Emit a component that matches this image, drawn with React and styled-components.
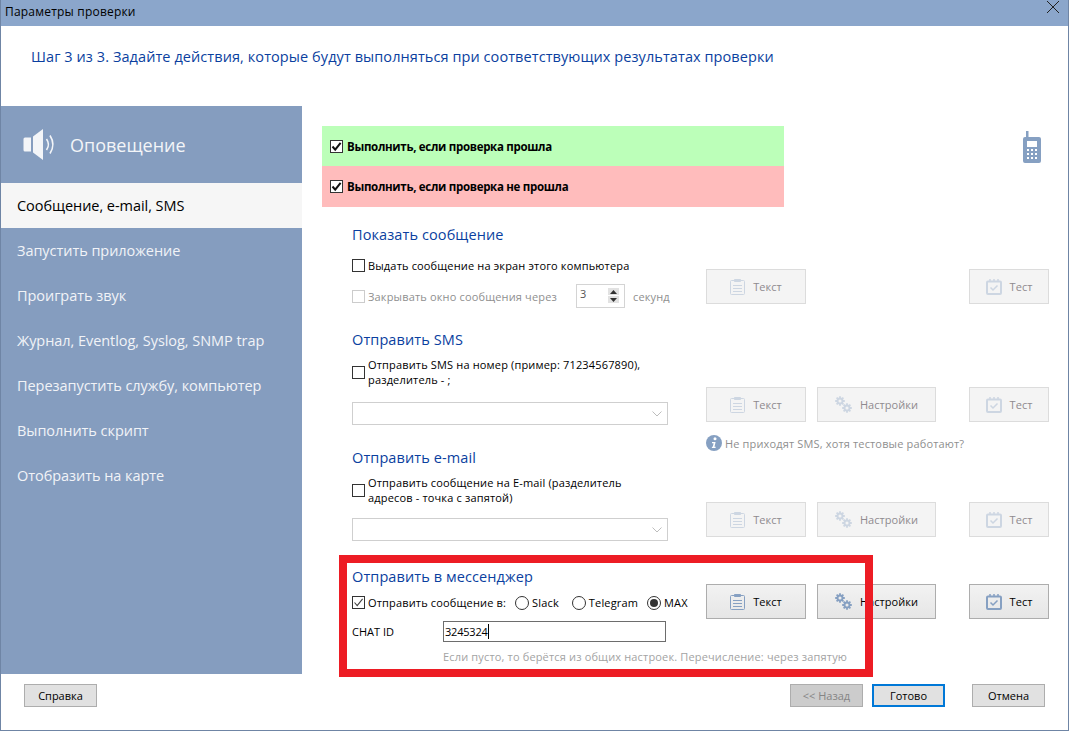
import React from 'react';
import styled, { createGlobalStyle } from 'styled-components';

const Global = createGlobalStyle`
  html, body { margin: 0; padding: 0; background: #fff; }
  body { font-family: "Open Sans", "Noto Sans", sans-serif; color: #000; }
  * { box-sizing: border-box; }
`;

const ICON = '#86a0c2';

const Window = styled.div`
  position: relative;
  width: 1069px;
  height: 731px;
  display: flex;
  flex-direction: column;
  border: solid #6f85a5;
  border-width: 0 1px 1px 1px;
  overflow: hidden;
`;

const TitleBar = styled.div`
  height: 26px;
  flex: none;
  background: #8ba6cb;
  display: flex;
  align-items: center;
  justify-content: space-between;
  padding: 0 9px 4px 4px;
  font-size: 12px;
  letter-spacing: 0.2px;
  svg { align-self: flex-start; margin-top: 1px; }
`;

const Heading = styled.div`
  height: 80px;
  flex: none;
  padding: 21px 0 0 30px;
  font-size: 14.5px;
  line-height: 20px;
  letter-spacing: 0.08px;
  color: #0b3fa0;
`;

const Body = styled.div`
  height: 568px;
  flex: none;
  display: flex;
`;

const Sidebar = styled.nav`
  width: 301px;
  flex: none;
  background: #859dbf;
`;

const SidebarHead = styled.div`
  height: 77px;
  display: flex;
  align-items: center;
  gap: 13px;
  padding-left: 22px;
  font-size: 18px;
  color: #f3f5f8;
`;

const NavItem = styled.div`
  height: 45px;
  display: flex;
  align-items: center;
  padding-left: 16px;
  font-size: 14.5px;
  letter-spacing: -0.05px;
  color: ${p => (p.$active ? '#000' : '#f1f3f7')};
  background: ${p => (p.$active ? '#f6f6f6' : 'transparent')};
`;

const Main = styled.div`
  flex: 1;
  padding: 20px 0 0 20px;
  display: flex;
  flex-direction: column;
`;

const TopRow = styled.div`
  height: 99px;
  flex: none;
  display: flex;
  justify-content: space-between;
  padding-right: 27px;
  svg { margin-top: 5px; }
`;

const Outcomes = styled.div`
  width: 462px;
  height: 81px;
`;

const Outcome = styled.div`
  height: ${p => p.$h}px;
  display: flex;
  align-items: center;
  gap: 4px;
  padding-left: 8px;
  background: ${p => p.$bg};
  font-size: 11.5px;
  font-weight: 700;
  letter-spacing: -0.3px;
  svg { margin: 0; }
`;

const Section = styled.section`
  height: ${p => p.$h}px;
  flex: none;
  display: flex;
`;

const Left = styled.div`
  width: 384px;
  flex: none;
  padding-left: 30px;
`;

const Right = styled.div`
  padding-top: ${p => p.$top}px;
`;

const SectionTitle = styled.div`
  font-size: 14.5px;
  line-height: 20px;
  color: #0b3fa0;
  letter-spacing: 0.1px;
`;

const CheckRow = styled.div`
  display: flex;
  align-items: center;
  gap: 3px;
  margin-top: ${p => p.$top || 0}px;
  font-size: 11px;
  line-height: 15px;
  letter-spacing: 0.16px;
  color: ${p => (p.$disabled ? '#8f8f8f' : '#000')};
`;

const Box = styled.span`
  width: 13px;
  height: 13px;
  flex: none;
  display: inline-flex;
  align-items: center;
  justify-content: center;
  background: #fff;
  border: 1px solid ${p => (p.$disabled ? '#cccccc' : '#333')};
`;

const Spin = styled.div`
  width: 49px;
  height: 24px;
  margin-left: 16px;
  border: 1px solid #d4d4d4;
  display: flex;
  justify-content: space-between;
  padding: 1px 5px 0 3px;
  color: #555;
`;

const SpinArrows = styled.div`
  display: flex;
  flex-direction: column;
  gap: 1px;
  padding-top: 2px;
`;

const SpinBtn = styled.span`
  width: 11px;
  height: 7px;
  background: #e2e2e2;
  display: flex;
  align-items: center;
  justify-content: center;
`;

const Seconds = styled.span`
  margin-left: 5px;
`;

const Select = styled.div`
  width: 316px;
  height: 23px;
  margin-top: ${p => p.$top}px;
  border: 1px solid #cfcfcf;
  display: flex;
  align-items: center;
  justify-content: flex-end;
  padding-right: 3px;
`;

const ButtonRow = styled.div`
  width: 343px;
  display: flex;
  gap: 11px;
`;

const Btn = styled.div`
  width: ${p => p.$w}px;
  height: 35px;
  flex: none;
  margin-left: ${p => (p.$end ? 'auto' : '0')};
  display: flex;
  align-items: center;
  justify-content: center;
  gap: 8px;
  font-size: 11px;
  letter-spacing: 0.05px;
  border: 1px solid ${p => (p.$on ? '#adadad' : '#dcdcdc')};
  background: ${p => (p.$on ? 'linear-gradient(#f2f2f2, #e6e6e6)' : '#f4f4f4')};
  color: ${p => (p.$on ? '#000' : '#8f8a8f')};
  svg { opacity: ${p => (p.$on ? 1 : 0.35)}; }
`;

const Hint = styled.div`
  display: flex;
  align-items: center;
  gap: 3px;
  margin-top: 13px;
  font-size: 11px;
  letter-spacing: 0.15px;
  color: #8f8f8f;
`;

const Radio = styled.span`
  width: 14px;
  height: 14px;
  flex: none;
  border-radius: 50%;
  border: 1px solid #333;
  background: #fff;
  display: inline-flex;
  align-items: center;
  justify-content: center;
  margin-left: ${p => p.$gap}px;
  &::after {
    content: "";
    display: ${p => (p.$on ? 'block' : 'none')};
    width: 8px;
    height: 8px;
    border-radius: 50%;
    background: #333;
  }
`;

const ChatRow = styled.div`
  display: flex;
  align-items: center;
  margin-top: 11px;
  font-size: 11px;
  letter-spacing: 0;
`;

const ChatLabel = styled.span`
  width: 91px;
`;

const ChatInput = styled.div`
  width: 223px;
  height: 21px;
  border: 1px solid #6d6d6d;
  padding-left: 1px;
  line-height: 17px;
  display: flex;
  align-items: center;
  letter-spacing: -0.2px;
  span { border-right: 1px solid #000; height: 15px; line-height: 15px; }
`;

const ChatHint = styled.div`
  margin: 7px 0 0 91px;
  font-size: 11px;
  letter-spacing: 0.16px;
  white-space: nowrap;
  color: #a3a3a3;
`;

const Footer = styled.div`
  flex: 1;
  display: flex;
  align-items: flex-start;
  padding: 10px 23px 0 23px;
`;

const FootBtn = styled.div`
  width: ${p => p.$w || 73}px;
  height: 23px;
  margin-left: ${p => p.$left || 0}px;
  display: flex;
  align-items: center;
  justify-content: center;
  font-size: 11px;
  background: ${p => (p.$disabled ? '#cccccc' : '#e1e1e1')};
  color: ${p => (p.$disabled ? '#858585' : '#000')};
  border: ${p => (p.$primary ? '2px solid #0078d7' : '1px solid #adadad')};
`;

const Spacer = styled.div`
  flex: 1;
`;

const Callout = styled.div`
  position: absolute;
  left: 338px;
  top: 555px;
  width: 534px;
  height: 122px;
  border: 8px solid #ed1c24;
  pointer-events: none;
`;

const Tick = () => (
  <svg width="11" height="11" viewBox="0 0 11 11">
    <path d="M1.5 5.5 4.2 8.6 9.6 1.8" fill="none" stroke="#111" strokeWidth="2" />
  </svg>
);

const ThinTick = () => (
  <svg width="11" height="11" viewBox="0 0 11 11">
    <path d="M1.5 5.5 4.2 8.6 9.6 1.8" fill="none" stroke="#444" strokeWidth="1.1" />
  </svg>
);

const Clipboard = () => (
  <svg width="15" height="17" viewBox="0 0 15 17" fill="none" stroke={ICON}>
    <path d="M4.5 2.5H1.5a1 1 0 0 0-1 1v12a1 1 0 0 0 1 1h12a1 1 0 0 0 1-1v-12a1 1 0 0 0-1-1h-3" />
    <path d="M4.5 1.5h6v2h-6z" fill={ICON} />
    <path d="M3 7.5h9M3 10.5h9M3 13.5h9" />
  </svg>
);

// cog: ring with eight short teeth, no spokes across the hole
const Gear = ({ x, y }) => (
  <g transform={`translate(${x} ${y})`} stroke={ICON} fill="none">
    <circle r="2.5" strokeWidth="1.9" />
    <path
      strokeWidth="1.8"
      d="M-4.800 0H-3M3 0H4.800M0 -4.800V-3M0 3V4.800M-3.400 -3.400 -2.100 -2.100M3.400 3.400 2.100 2.100M-3.400 3.400 -2.100 2.100M3.400 -3.400 2.100 -2.100"
    />
  </g>
);

const Gears = () => (
  <svg width="17" height="17" viewBox="0 0 17 17">
    <Gear x={5} y={5} />
    <Gear x={12} y={12} />
  </svg>
);

const Calendar = () => (
  <svg width="16" height="16" viewBox="0 0 16 16" fill="none" stroke={ICON}>
    <rect x="1" y="2.5" width="14" height="12.5" rx="1" strokeWidth="2" />
    <path d="M4 0v3M8 0v3M12 0v3" strokeWidth="1.5" />
    <path d="M4.5 8.5 7 11l4.5-4.5" strokeWidth="1.5" />
  </svg>
);

const Speaker = () => (
  <svg width="34" height="34" viewBox="0 0 34 34" fill="#f3f5f8">
    <path d="M2 9.5h6v14H2a1.5 1.5 0 0 1-1.5-1.5V11A1.5 1.5 0 0 1 2 9.5z" />
    <path d="M10 8.5 20 1v31L10 24.5z" />
    <path d="M23.5 11c2.4 3.4 2.4 7.6 0 11" fill="none" stroke="#f3f5f8" strokeWidth="1.6" />
    <path d="M27 7.5c3.6 5.6 3.6 12.4 0 18" fill="none" stroke="#f3f5f8" strokeWidth="1.6" />
  </svg>
);

const Phone = () => (
  <svg width="18" height="32" viewBox="0 0 18 32">
    <path
      fill={ICON}
      fillRule="evenodd"
      d="M3 0h2.500v6H16a2 2 0 0 1 2 2v22a2 2 0 0 1-2 2H2a2 2 0 0 1-2-2V8a2 2 0 0 1 2-2h1z M4 10v6h10v-6z M4 18v2h2v-2z M8 18v2h2v-2z M12 18v2h2v-2z M4 22v2h2v-2z M8 22v2h2v-2z M12 22v2h2v-2z M4 26v2h2v-2z M8 26v2h2v-2z M12 26v2h2v-2z"
    />
  </svg>
);

const Info = () => (
  <svg width="16" height="16" viewBox="0 0 16 16">
    <circle cx="8" cy="8" r="8" fill={ICON} />
    <circle cx="9" cy="3.800" r="1.500" fill="#fff" />
    <path d="M6 7h3.600L8.500 11.800h1.200l-.2 1.200H5.800l.2-1.200h.8L7.600 8.200H6z" fill="#fff" />
  </svg>
);

const Chevron = () => (
  <svg width="14" height="14" viewBox="0 0 14 14">
    <path d="M2.500 4.500 7 9l4.500-4.500" fill="none" stroke="#bdbdbd" />
  </svg>
);

const Close = () => (
  <svg width="12" height="12" viewBox="0 0 12 12">
    <path d="M0 0 12 12M12 0 0 12" stroke="#222" strokeWidth="1" />
  </svg>
);

const Actions = ({ settings, on }) => (
  <ButtonRow>
    <Btn $w={100} $on={on}><Clipboard />Текст</Btn>
    {settings && <Btn $w={119} $on={on}><Gears />Настройки</Btn>}
    <Btn $w={80} $end $on={on}><Calendar />Тест</Btn>
  </ButtonRow>
);

const navItems = [
  'Запустить приложение',
  'Проиграть звук',
  'Журнал, Eventlog, Syslog, SNMP trap',
  'Перезапустить службу, компьютер',
  'Выполнить скрипт',
  'Отобразить на карте',
];

export default function App() {
  return (
    <>
      <Global />
      <Window>
        <TitleBar>
          Параметры проверки
          <Close />
        </TitleBar>
        <Heading>Шаг 3 из 3. Задайте действия, которые будут выполняться при соответствующих результатах проверки</Heading>
        <Body>
          <Sidebar>
            <SidebarHead><Speaker />Оповещение</SidebarHead>
            <NavItem $active>Сообщение, e-mail, SMS</NavItem>
            {navItems.map(item => <NavItem key={item}>{item}</NavItem>)}
          </Sidebar>
          <Main>
            <TopRow>
              <Outcomes>
                <Outcome $h={40} $bg="#bcffb9"><Box><Tick /></Box>Выполнить, если проверка прошла</Outcome>
                <Outcome $h={41} $bg="#ffbcbc"><Box><Tick /></Box>Выполнить, если проверка не прошла</Outcome>
              </Outcomes>
              <Phone />
            </TopRow>

            <Section $h={105}>
              <Left>
                <SectionTitle>Показать сообщение</SectionTitle>
                <CheckRow $top={13}><Box />Выдать сообщение на экран этого компьютера</CheckRow>
                <CheckRow $top={11} $disabled>
                  <Box $disabled />Закрывать окно сообщения через
                  <Spin>
                    3
                    <SpinArrows>
                      <SpinBtn><svg width="7" height="4"><path d="M3.500 0 7 4H0z" fill="#333" /></svg></SpinBtn>
                      <SpinBtn><svg width="7" height="4"><path d="M0 0h7L3.500 4z" fill="#333" /></svg></SpinBtn>
                    </SpinArrows>
                  </Spin>
                  <Seconds>секунд</Seconds>
                </CheckRow>
              </Left>
              <Right $top={44}><Actions /></Right>
            </Section>

            <Section $h={118}>
              <Left>
                <SectionTitle>Отправить SMS</SectionTitle>
                <CheckRow $top={7}><Box />Отправить SMS на номер (пример: 71234567890),<br />разделитель - ;</CheckRow>
                <Select $top={15}><Chevron /></Select>
              </Left>
              <Right $top={57}>
                <Actions settings />
                <Hint><Info />Не приходят SMS, хотя тестовые работают?</Hint>
              </Right>
            </Section>

            <Section $h={119}>
              <Left>
                <SectionTitle>Отправить e-mail</SectionTitle>
                <CheckRow $top={7}><Box />Отправить сообщение на E-mail (разделитель<br />адресов - точка с запятой)</CheckRow>
                <Select $top={13}><Chevron /></Select>
              </Left>
              <Right $top={54}><Actions settings /></Right>
            </Section>

            <Section $h={107}>
              <Left>
                <SectionTitle>Отправить в мессенджер</SectionTitle>
                <CheckRow $top={8}>
                  <Box><ThinTick /></Box>Отправить сообщение в:
                  <Radio $gap={6} />Slack
                  <Radio $gap={10} />Telegram
                  <Radio $gap={6} $on />MAX
                </CheckRow>
                <ChatRow>
                  <ChatLabel>CHAT ID</ChatLabel>
                  <ChatInput><span>3245324</span></ChatInput>
                </ChatRow>
                <ChatHint>Если пусто, то берётся из общих настроек. Перечисление: через запятую</ChatHint>
              </Left>
              <Right $top={17}><Actions settings on /></Right>
            </Section>
          </Main>
        </Body>
        <Footer>
          <FootBtn>Справка</FootBtn>
          <Spacer />
          <FootBtn $disabled>&lt;&lt; Назад</FootBtn>
          <FootBtn $primary $left={9}>Готово</FootBtn>
          <FootBtn $left={27}>Отмена</FootBtn>
        </Footer>
        <Callout />
      </Window>
    </>
  );
}
